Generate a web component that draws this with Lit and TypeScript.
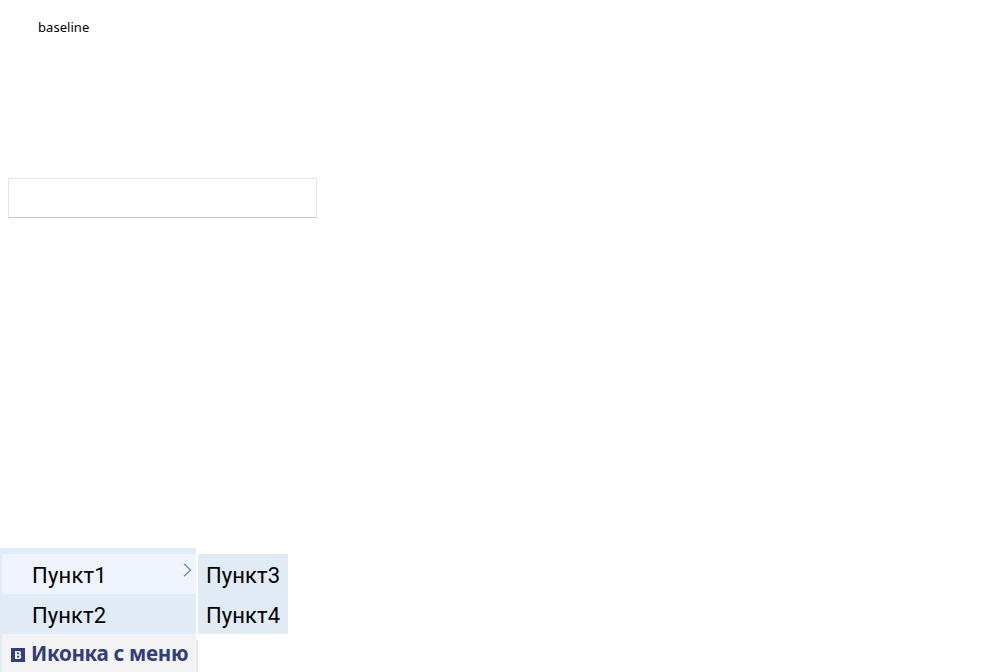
import { LitElement, html, css } from "lit";
import { customElement } from "lit/decorators.js";

@customElement("app-root")
export class AppRoot extends LitElement {
  static styles = css`
    :host { display: flex; flex-direction: column; height: 672px; overflow: hidden; background: #fff; color: #000; }
    .label { margin: 17px 0 0 38px; height: 20px; font: 13px/20px "Noto Sans", sans-serif; letter-spacing: 0.05px; }
    .field { box-sizing: border-box; width: 309px; height: 40px; margin: 141px 0 0 8px; padding: 0 8px; border: 1px solid #e5e5e5; border-bottom-color: #c8c8c8; background: #fff; border-radius: 0; outline: none; }
    .dock { display: flex; align-items: flex-start; margin-top: auto; height: 124px; }
    .menu { box-sizing: border-box; width: 196px; height: 124px; border: solid #e1ebf6; border-width: 6px 0 0 2px; background: #e1ebf6; }
    .item { display: flex; justify-content: space-between; box-sizing: border-box; height: 40px; padding-left: 30px; font: 22px/44px Roboto, sans-serif; letter-spacing: 0.08px; white-space: nowrap; }
    .active { background: #eff4fc; }
    .active span { letter-spacing: 0.22px; }
    .arrow { width: 9px; height: 14px; margin: 9px 4px 0 0; }
    .title { display: flex; height: 38px; background: #f3f3f3; color: #313e7b; font: bold 22px/36px "Noto Sans", sans-serif; white-space: nowrap; }
    .logo { width: 14px; height: 14px; margin: 14px 6px 0 9px; flex: none; }
    .caption { letter-spacing: -0.35px; transform: scaleX(0.937); transform-origin: left; }
    .side { display: flex; flex-direction: column; margin-top: 6px; }
    .submenu { width: 90px; height: 80px; margin-left: 2px; background: #e1ebf6; }
    .submenu .item { padding-left: 8px; }
    .edge { width: 2px; height: 32px; margin-top: 6px; background: #e1ebf6; }
  `;

  render() {
    return html`
      <div class="label">baseline</div>
      <input class="field" type="text" />
      <div class="dock">
        <div class="menu">
          <div class="item active">
            <span>Пункт1</span>
            <svg class="arrow" viewBox="0 0 9 14" fill="none" stroke="#6788bb" stroke-width="1.3"><path d="M1 .8 7.5 7 1 13.2" /></svg>
          </div>
          <div class="item"><span>Пункт2</span></div>
          <div class="title">
            <svg class="logo" viewBox="0 0 14 14">
              <path fill="#313e7b" d="M0 0H14V14H0Z" />
              <path fill="#f3f3f3" fill-rule="evenodd" d="M4 3H8C9.4 3 10 3.8 10 5C10 6 9.5 6.6 8.9 6.8C9.8 7 10.3 7.7 10.3 8.7C10.3 10.2 9.3 11 8 11H4ZM6 4.5V6.3H7.5C8.4 6.3 8.4 4.5 7.5 4.5ZM6 7.7V9.5H7.6C8.6 9.5 8.6 7.7 7.6 7.7Z" />
            </svg>
            <span class="caption">Иконка с меню</span>
          </div>
        </div>
        <div class="side">
          <div class="submenu">
            <div class="item"><span>Пункт3</span></div>
            <div class="item"><span>Пункт4</span></div>
          </div>
          <div class="edge"></div>
        </div>
      </div>
    `;
  }
}
